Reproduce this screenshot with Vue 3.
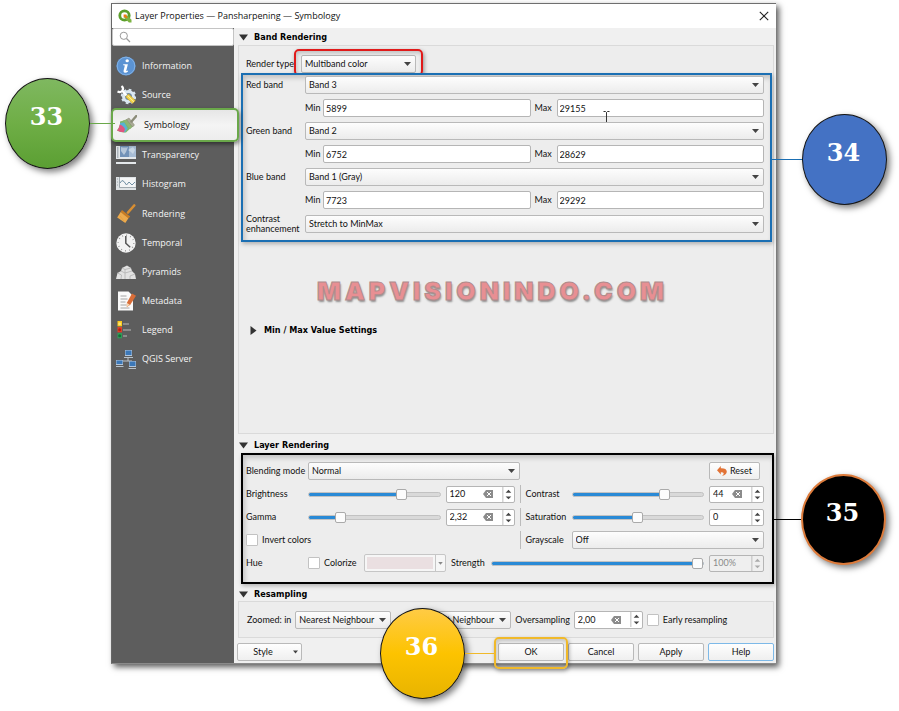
<script setup>
import { ref } from 'vue'

const pages = ['Information', 'Source', 'Symbology', 'Transparency', 'Histogram', 'Rendering', 'Temporal', 'Pyramids', 'Metadata', 'Legend', 'QGIS Server']
const active = ref('Symbology')

const bands = ref([
  { id: 'red', label: 'Red band', band: 'Band 3', min: '5899', max: '29155', pointer: true },
  { id: 'green', label: 'Green band', band: 'Band 2', min: '6752', max: '28629' },
  { id: 'blue', label: 'Blue band', band: 'Band 1 (Gray)', min: '7723', max: '29292' }
])

const left = ref([
  { id: 'brightness', label: 'Brightness', pos: 73, value: '120', clear: true },
  { id: 'gamma', label: 'Gamma', pos: 22, value: '2,32', clear: true }
])
const right = ref([
  { id: 'contrast', label: 'Contrast', pos: 72, value: '44', clear: true },
  { id: 'saturation', label: 'Saturation', pos: 50, value: '0', clear: false }
])
const strength = ref(100)
</script>

<template>
  <main class="page">
    <section class="dialog" aria-label="Layer Properties">
      <header class="titlebar">
        <svg class="logo" viewBox="0 0 14 14" aria-hidden="true">
          <circle cx="6.5" cy="6.5" r="4.7" fill="none" stroke="#5c9f2c" stroke-width="2.8" />
          <path d="M6.2 6.2h3l4.3 4.6v2.7h-2.6L6.2 8.8z" fill="#7cb342" />
          <path d="M5.6 5.6h3.2L8 6.6l1.6 1.7-1.2 1.2-1.7-1.7-1.1.9z" fill="#ee7913" />
        </svg>
        <h1>Layer Properties — Pansharpening — Symbology</h1>
        <button class="close" type="button" aria-label="Close">
          <svg viewBox="0 0 10 10"><path d="M.8.8l8.4 8.4M9.2.8L.8 9.2" stroke="#222" stroke-width="1.1" /></svg>
        </button>
      </header>

      <div class="body">
        <aside class="side">
          <div class="search">
            <svg viewBox="0 0 12 12" aria-hidden="true"><circle cx="4.8" cy="4.8" r="3.6" fill="none" stroke="#999" /><path d="M7.5 7.5l3.5 3.5" stroke="#999" stroke-width="1.2" /></svg>
            <input type="text" aria-label="Search" />
          </div>
          <nav class="pages">
            <a v-for="p in pages" :key="p" href="#" class="page-link" :class="{ active: p === active }" @click.prevent="active = p">
              <svg v-if="p === 'Information'" class="ico" viewBox="0 0 20 20">
                <circle cx="10" cy="10" r="9.6" fill="#5b93d3" /><circle cx="10" cy="10" r="8.8" fill="none" stroke="#82b1e4" />
                <ellipse cx="11.2" cy="4.8" rx="1.7" ry="1.5" fill="#fff" />
                <path d="M7.3 8.3h4.6l-1.6 6.2q-.1.7.5.5l1.2-.6v1.1q-1.6 1.4-3.3 1.2-1.6-.3-1.1-2.1l1.2-4.8q0-.6-.7-.6h-1z" fill="#fff" />
              </svg>
              <svg v-else-if="p === 'Source'" class="ico" viewBox="0 0 20 20">
                <circle cx="12.5" cy="11.5" r="5" fill="#6f8ba5" stroke="#dbe8f2" stroke-width="3" />
                <circle cx="12.5" cy="11.5" r="6.8" fill="none" stroke="#dbe8f2" stroke-width="1.8" stroke-dasharray="2.7 2.640" />
                <path d="M1.500 6.500q3.500 1.500 5-1t-1-4.500M6.500 6l4 4.500" fill="none" stroke="#fff" stroke-width="2.200" />
                <path d="M9.600 12l3-3 6.700 6.600-2.700 2.800z" fill="#f2d44c" stroke="#c79f25" stroke-width=".6" />
                <path d="M11.500 10.500l6.500 6.500" stroke="#fbeb9a" />
              </svg>
              <svg v-else-if="p === 'Symbology'" class="ico" viewBox="0 0 20 20">
                <path d="M3 6.500l9-2.500 4 7-7 6.500Q4 18 0 15.500 3.500 11 3 6.500z" fill="#7db86a" />
                <path d="M2.800 8l4.500-.500 3.500 6-2.800 3.800-5-.800q-1-4 .200-8.500z" fill="#58b3d2" />
                <path d="M2.700 9.500q3 .500 5.300 4.500l-1 3.300Q3 17.500 0 15.500 2.500 12.500 2.700 9.500z" fill="#e0557f" />
                <path d="M6 5.600l5.500-1.800 5.500 6.700-3.800 3.400z" fill="#8fb573" />
                <path d="M9.500 4.500l2.500-1.500 5.500 7-2 2z" fill="#a9aa96" stroke="#85866f" stroke-width=".5" />
                <path d="M14.500 6.500l4.800-5.500" stroke="#8b8c79" stroke-width="2.400" stroke-linecap="round" />
              </svg>
              <svg v-else-if="p === 'Transparency'" class="ico" viewBox="0 0 20 20">
                <path d="M0 1h20v13H0zM0 17h20v2H0z" fill="#e4e8eb" /><path d="M4 1h16v11H4z" fill="#7292b8" />
                <path d="M5 2q4 1 7 0l-2 5-2 3-3-4zM12 5l5-3 2 3-2 4-2-2z" fill="#b5c6d9" /><path d="M13 1h7v11h-7z" fill="#dce6ef" opacity=".5" />
                <path d="M1 2h1.500v11H1z" fill="#aeb5bc" />
              </svg>
              <svg v-else-if="p === 'Histogram'" class="ico" viewBox="0 0 20 20">
                <path d="M0 3h20v13H0z" fill="#dfe3e6" /><path d="M4 4h15v9H4z" fill="#f4f5f6" />
                <path d="M3.500 3v10.500H20M1 5h1M1 8h1M1 11h1" fill="none" stroke="#8e999f" stroke-width=".8" />
                <path d="M4 9l2-2.500 2 1 2.500 3.500 2.500-3 3 3 3-3" fill="none" stroke="#718fa3" />
              </svg>
              <svg v-else-if="p === 'Rendering'" class="ico" viewBox="0 0 20 20">
                <path d="M12 8.500L18.200 1.500" stroke="#d88e31" stroke-width="2.600" stroke-linecap="round" />
                <path d="M6 6l8.200 6.400-1.900 2L4.600 8z" fill="#c97c22" />
                <path d="M4.600 8l7.800 6.300L9.300 19 1.200 13.600z" fill="#edaa4c" />
                <path d="M4 12l4 5" stroke="#e09c3e" stroke-width=".7" />
              </svg>
              <svg v-else-if="p === 'Temporal'" class="ico" viewBox="0 0 20 20">
                <circle cx="10" cy="10" r="9.700" fill="#f3f3f3" />
                <circle cx="10" cy="10" r="7.800" fill="none" stroke="#8a8a8a" stroke-width="1.400" stroke-dasharray=".8 3.285" />
                <path d="M9.800 3v7.200l4.400 4" fill="none" stroke="#555" stroke-width="1.500" />
              </svg>
              <svg v-else-if="p === 'Pyramids'" class="ico" viewBox="0 0 20 20">
                <path d="M0 17l1.500-6L5 9l1-3 5-2.500L15 6l1 3 3 3 1 5z" fill="#e2e2e2" />
                <path d="M6 6l3 1.500L15 6M5 9l4 2 7-2M9 7.500V17M1.500 11l4 2L5 17M19 12l-5 2v3" fill="none" stroke="#b2b2b2" stroke-width=".8" />
              </svg>
              <svg v-else-if="p === 'Metadata'" class="ico" viewBox="0 0 20 20">
                <path d="M2 .5h10.500L17 5v14.500H2z" fill="#fafafa" />
                <path d="M4.500 5h6M4.500 8h7M4.500 11h5M4.500 14h6M4.500 17h9" stroke="#9c9c9c" stroke-width=".9" />
                <path d="M16 2.500l4 2.300-5.700 9-3.500 2.200.1-4.200z" fill="#d96d38" /><path d="M11 12l-.2 3.800 3-2z" fill="#f4d6b0" />
              </svg>
              <svg v-else-if="p === 'Legend'" class="ico" viewBox="0 0 20 20">
                <path d="M1.500 1H6v5.300H1.500z" fill="#fcca1c" /><path d="M1.500 7H6v5.300H1.500z" fill="#e0442a" /><path d="M1.500 13H6v5.300H1.500z" fill="#2e9e58" />
                <circle cx="3.700" cy="3.700" r="1.500" fill="#ffe571" /><circle cx="3.700" cy="9.700" r="1.500" fill="#b91f14" /><circle cx="3.700" cy="15.700" r="1.500" fill="#126d35" />
                <path d="M7 4h6M7 10h8M7 16h4" stroke="#9b9b9b" stroke-width="1.300" />
              </svg>
              <svg v-else class="ico" viewBox="0 0 20 20">
                <path d="M12 8v4M3 12h13v2M4 12v1" fill="none" stroke="#bdc3c9" />
                <path d="M9 1h7v6H9zM0 11h7v5H0zM13 12h7v6h-7z" fill="#b4c6da" />
                <path d="M9.500 1.500h6v4.500h-6zM.500 11.500h6V15h-6zM13.500 12.500h6v4.500h-6z" fill="#3c78b8" />
                <path d="M8 8h9v1H8zM-.500 17h8v1h-8zM12.500 19h7.500v1h-7.500z" fill="#b7c1ca" />
              </svg>
              <span>{{ p }}</span>
              <span v-if="p === active" class="callout c33" aria-hidden="true"><b class="ball green">33</b><i class="wire"></i></span>
            </a>
          </nav>
        </aside>

        <div class="main">
          <h2><svg class="tri" viewBox="0 0 9 7"><path d="M0 .5h9L4.500 6.500z" /></svg>Band Rendering</h2>
          <section class="frame bands">
            <div class="render-row">
              <label for="render">Render type</label>
              <span class="combo render">
                <select id="render"><option>Multiband color</option></select>
                <svg class="arrow" viewBox="0 0 7 4"><path d="M0 0h7L3.500 4z" /></svg>
                <i class="mark red"></i>
              </span>
            </div>
            <div class="boxed blue">
              <template v-for="b in bands" :key="b.id">
                <label :for="b.id">{{ b.label }}</label>
                <span class="combo">
                  <select :id="b.id"><option>{{ b.band }}</option></select>
                  <svg class="arrow" viewBox="0 0 7 4"><path d="M0 0h7L3.500 4z" /></svg>
                </span>
                <div class="range">
                  <label :for="b.id + '-min'">Min</label>
                  <input :id="b.id + '-min'" v-model="b.min" type="text" />
                  <label :for="b.id + '-max'">Max</label>
                  <input :id="b.id + '-max'" v-model="b.max" type="text" />
                  <svg v-if="b.pointer" class="ibeam" viewBox="0 0 7 13"><path d="M.500.500h2l1 1 1-1h2M3.500 1.500v10M.500 12.500h2l1-1 1 1h2" fill="none" stroke="#333" /></svg>
                </div>
              </template>
              <label for="enh">Contrast enhancement</label>
              <span class="combo">
                <select id="enh"><option>Stretch to MinMax</option></select>
                <svg class="arrow" viewBox="0 0 7 4"><path d="M0 0h7L3.500 4z" /></svg>
              </span>
              <span class="callout c34" aria-hidden="true"><i class="wire"></i><b class="ball azure">34</b></span>
            </div>
            <p class="brand">MAPVISIONINDO.COM</p>
            <h3><svg class="tri side-tri" viewBox="0 0 7 9"><path d="M.500 0v9L6.500 4.500z" /></svg>Min / Max Value Settings</h3>
          </section>

          <h2 class="spaced"><svg class="tri" viewBox="0 0 9 7"><path d="M0 .5h9L4.500 6.500z" /></svg>Layer Rendering</h2>
          <section class="boxed black">
            <div class="row">
              <label class="name" for="blend">Blending mode</label>
              <span class="combo blend">
                <select id="blend"><option>Normal</option></select>
                <svg class="arrow" viewBox="0 0 7 4"><path d="M0 0h7L3.500 4z" /></svg>
              </span>
              <button class="btn reset" type="button">
                <svg viewBox="0 0 10 10"><path d="M3.800 0v2.200Q9.600 2 9.800 5.600 9.800 9 5 10q2-1.400 1.700-2.700-.4-1.200-2.900-1V8.500L0 4.200z" fill="#e27336" /></svg>Reset
              </button>
            </div>
            <div class="halves">
              <div class="half">
                <div v-for="s in left" :key="s.id" class="row">
                  <label class="name" :for="s.id">{{ s.label }}</label>
                  <input v-model="s.pos" type="range" :id="s.id" :style="{ '--fill': s.pos + '%' }" />
                  <span class="spin">
                    <input v-model="s.value" type="text" :aria-label="s.label + ' value'" />
                    <svg class="clear" viewBox="0 0 10 8"><path d="M3 0h7v8H3L0 4z" fill="#8b8b8b" /><path d="M4 2l4 4M8 2L4 6" stroke="#fff" /></svg>
                    <svg class="steps" viewBox="0 0 12 16"><path d="M.500 0v16" stroke="#bbb" /><path d="M3.500 6L6.500 3l3 3zM3.500 10l3 3 3-3z" fill="#444" /></svg>
                  </span>
                </div>
                <div class="row"><label class="tick"><input type="checkbox" />Invert colors</label></div>
              </div>
              <div class="half second">
                <div v-for="s in right" :key="s.id" class="row">
                  <label class="name" :for="s.id">{{ s.label }}</label>
                  <input v-model="s.pos" type="range" :id="s.id" :style="{ '--fill': s.pos + '%' }" />
                  <span class="spin narrow">
                    <input v-model="s.value" type="text" :aria-label="s.label + ' value'" />
                    <svg v-if="s.clear" class="clear" viewBox="0 0 10 8"><path d="M3 0h7v8H3L0 4z" fill="#8b8b8b" /><path d="M4 2l4 4M8 2L4 6" stroke="#fff" /></svg>
                    <svg class="steps" viewBox="0 0 12 16"><path d="M.500 0v16" stroke="#bbb" /><path d="M3.500 6L6.500 3l3 3zM3.500 10l3 3 3-3z" fill="#444" /></svg>
                  </span>
                </div>
                <div class="row">
                  <label class="name" for="gray">Grayscale</label>
                  <span class="combo">
                    <select id="gray"><option>Off</option></select>
                    <svg class="arrow" viewBox="0 0 7 4"><path d="M0 0h7L3.500 4z" /></svg>
                  </span>
                </div>
              </div>
            </div>
            <div class="row">
              <span class="name">Hue</span>
              <label class="tick colorize"><input type="checkbox" />Colorize</label>
              <span class="swatch">
                <button type="button" aria-label="Hue color"><i></i></button>
                <svg viewBox="0 0 9 18"><path d="M2 8h5L4.500 11z" fill="#888" /></svg>
              </span>
              <label class="strength" for="strength">Strength</label>
              <input id="strength" v-model="strength" type="range" :style="{ '--fill': strength + '%' }" />
              <span class="spin narrow off">
                <input type="text" value="100%" disabled aria-label="Strength value" />
                <svg class="steps" viewBox="0 0 12 16"><path d="M.500 0v16" stroke="#bbb" /><path d="M3.500 6L6.500 3l3 3zM3.500 10l3 3 3-3z" fill="#aaa" /></svg>
              </span>
            </div>
            <span class="callout c35" aria-hidden="true"><i class="wire"></i><b class="ball ink">35</b></span>
          </section>

          <h2 class="low"><svg class="tri" viewBox="0 0 9 7"><path d="M0 .5h9L4.500 6.500z" /></svg>Resampling</h2>
          <section class="frame resample">
            <label for="zin">Zoomed: in</label>
            <span class="combo near">
              <select id="zin"><option>Nearest Neighbour</option></select>
              <svg class="arrow" viewBox="0 0 7 4"><path d="M0 0h7L3.500 4z" /></svg>
            </span>
            <span class="out"></span>
            <span class="combo near">
              <select aria-label="Zoomed out"><option>Nearest Neighbour</option></select>
              <svg class="arrow" viewBox="0 0 7 4"><path d="M0 0h7L3.500 4z" /></svg>
            </span>
            <label for="over">Oversampling</label>
            <span class="spin">
              <input id="over" type="text" value="2,00" />
              <svg class="clear" viewBox="0 0 10 8"><path d="M3 0h7v8H3L0 4z" fill="#8b8b8b" /><path d="M4 2l4 4M8 2L4 6" stroke="#fff" /></svg>
              <svg class="steps" viewBox="0 0 12 16"><path d="M.500 0v16" stroke="#bbb" /><path d="M3.500 6L6.500 3l3 3zM3.500 10l3 3 3-3z" fill="#444" /></svg>
            </span>
            <label class="tick"><input type="checkbox" />Early resampling</label>
          </section>

          <footer class="actions">
            <button class="btn style" type="button">Style<svg viewBox="0 0 7 4"><path d="M0 0h7L3.500 4z" fill="#444" /></svg></button>
            <span class="ok">
              <button class="btn" type="button">OK</button>
              <i class="mark gold"></i>
              <span class="callout c36" aria-hidden="true"><b class="ball amber">36</b><i class="wire"></i></span>
            </span>
            <button class="btn" type="button">Cancel</button>
            <button class="btn" type="button">Apply</button>
            <button class="btn help" type="button">Help</button>
          </footer>
        </div>
      </div>
    </section>
  </main>
</template>

<style>
body { margin: 0; background: #fff; }
</style>

<style scoped>
* { box-sizing: border-box; }
.page {
  padding: 3px 123px 49px 111px;
  font: 9px/10px Lato, "Liberation Sans", sans-serif;
  color: #111;
}
button, input, select { font: inherit; color: inherit; margin: 0; }
.dialog {
  background: #f0f0f0;
  border-top: 1px solid #6f6f6f;
  border-left: 1px solid #666;
  border-bottom: 1px solid #8a8a8a;
  box-shadow: 3px 3px 6px rgba(0, 0, 0, .65);
}
.titlebar { display: flex; align-items: center; gap: 3px; height: 24px; padding: 0 7px 0 6px; background: #fff; }
.logo { width: 14px; height: 14px; }
.titlebar h1 { flex: 1; margin: 0; font: 400 9px/14px "Open Sans", sans-serif; color: #111; }
.close { display: flex; padding: 0; border: 0; background: none; }
.close svg { width: 10px; height: 10px; }
.body { display: flex; }

.side { flex: none; width: 122px; background: #5d5d5d; }
.search { display: flex; align-items: center; gap: 4px; height: 18px; padding-left: 6px; background: #fff; border: 1px solid #c4c4c4; border-radius: 2px; }
.search svg { width: 12px; height: 12px; }
.search input { flex: 1; min-width: 0; border: 0; background: none; outline: 0; padding: 0; }
.pages { display: flex; flex-direction: column; height: 323px; margin-top: 5px; }
.page-link {
  position: relative; flex: 1; display: flex; align-items: center; gap: 6px;
  padding-left: 4px; color: #f4f4f4; text-decoration: none;
  font: 400 9px/12px "Open Sans", sans-serif;
}
.ico { width: 20px; height: 20px; }
.active {
  z-index: 2; margin: -1px -5px -1px -1px; color: #111; gap: 7px;
  border: 2px solid #6aa84a; border-radius: 5px;
  background: linear-gradient(#e6e6e6, #f4f4f4 50%, #ededed);
  box-shadow: 1px 2px 4px rgba(0, 0, 0, .5);
}

.main { flex: 1; min-width: 0; padding: 0 2px 2px 4px; }
h2, h3 { display: flex; align-items: center; margin: 0; color: #000; font: 700 9px/11px "DejaVu Sans Condensed", "DejaVu Sans", sans-serif; font-stretch: condensed; }
h2 { height: 17px; gap: 6px; padding-top: 1px; padding-left: 1px; }
h2.spaced { margin-top: 3px; height: 16px; padding-top: 0; }
h2.low { padding-top: 3px; }
h3 { gap: 7px; margin: 18px 9px 0; }
.tri { width: 9px; height: 7px; fill: #333; }
.side-tri { width: 7px; height: 9px; }
.frame { border: 1px solid #dadada; background: #ededed; }
.bands { padding: 8px 1px 97px 2px; }
.render-row { display: flex; align-items: center; gap: 7px; height: 19px; padding-left: 5px; }

.combo { position: relative; display: flex; flex: 1; min-width: 0; height: 18px; }
.combo select {
  width: 100%; height: 100%; padding: 0 14px 0 3px; appearance: none;
  border: 1px solid #b9b9b9; border-radius: 2px; background: linear-gradient(#fdfdfd, #ececec);
}
.arrow { position: absolute; right: 5px; top: 7px; width: 7px; height: 4px; fill: #444; pointer-events: none; }
.combo.render { flex: 0 0 115px; }
.mark { position: absolute; pointer-events: none; border-radius: 5px; }
.red { inset: -6px -7px -3px -7px; border: 2px solid #e01a1a; box-shadow: 1px 2px 4px rgba(0, 0, 0, .4), inset 1px 2px 4px rgba(0, 0, 0, .2); }
.gold { inset: -6px -4px -8px -4px; border: 2px solid #f0b92a; box-shadow: 1px 2px 4px rgba(0, 0, 0, .35), inset 1px 2px 4px rgba(0, 0, 0, .2); }

.boxed { position: relative; background: #ededed; box-shadow: 1px 2px 4px rgba(0, 0, 0, .25), inset 2px 3px 5px rgba(0, 0, 0, .18); }
.blue {
  display: grid; grid-template-columns: 54px 1fr; column-gap: 5px; row-gap: 5px; align-items: center;
  padding: 1px 6px 6px 3px; border: 2px solid #1b6fb3;
}
.range { grid-column: 2; position: relative; display: flex; align-items: center; gap: 4px; height: 18px; }
.range label { width: 14px; }
.range label:nth-of-type(2) { width: 18px; }
.range input, .spin {
  height: 18px; border: 1px solid #b5b5b5; border-radius: 2px; background: #fff;
}
.range input { flex: 1; min-width: 0; padding: 0 2px; }
.ibeam { position: absolute; left: 65%; top: 12px; width: 7px; height: 13px; }
.brand {
  margin: 33px 28px 0 0; text-align: center; white-space: nowrap;
  font: 900 25px/32px Inter, "Liberation Sans", sans-serif; letter-spacing: 4px; color: #e88f93;
  -webkit-text-stroke: 1px #b08c8c; text-shadow: 1px 2px 2px rgba(0, 0, 0, .4);
}

.black { display: flex; flex-direction: column; gap: 5px; padding: 7px 8px 10px 3px; margin: 0 0 0 3px; border: 2px solid #000; }
.row { display: flex; align-items: center; height: 18px; gap: 5px; }
.name { flex: none; width: 57px; white-space: nowrap; }
.combo.blend { flex: 0 0 212px; }
.btn {
  display: flex; align-items: center; justify-content: center; width: 66px; height: 18px; padding: 0;
  border: 1px solid #b9b9b9; border-radius: 2px; background: linear-gradient(#fefefe, #efefef);
}
.reset { width: 51px; margin-left: auto; margin-right: 4px; gap: 3px; }
.reset svg { width: 10px; height: 10px; }
.halves { display: grid; grid-template-columns: 268fr 244fr; column-gap: 5px; }
.half { display: flex; flex-direction: column; gap: 5px; min-width: 0; }
.second .row { border-left: 1px solid #bbb; padding-left: 5px; }
.second .name { width: 41px; }
input[type="range"] { flex: 1; min-width: 0; height: 14px; appearance: none; background: none; }
input[type="range"]::-webkit-slider-runnable-track {
  height: 5px; border-radius: 3px; border: 1px solid #c2c2c2;
  background: linear-gradient(#2a8ad6, #2a8ad6) 0 0 / var(--fill) 100% no-repeat border-box #d9d9d9;
}
input[type="range"]::-webkit-slider-thumb {
  appearance: none; width: 11px; height: 11px; margin-top: -4px;
  border: 1px solid #aaa; border-radius: 2px; background: #fcfcfc;
}
.spin { display: flex; align-items: center; flex: none; width: 69px; height: 17px; }
.spin input { flex: 1; width: 0; min-width: 0; padding: 0 0 0 3px; border: 0; background: none; }
.clear { width: 10px; height: 8px; margin-right: 9px; }
.steps { flex: none; width: 12px; height: 15px; }
.narrow { width: 55px; }
.off { color: #8a8a8a; background: #efefef; }
.tick { display: flex; align-items: center; gap: 4px; white-space: nowrap; }
.tick input { appearance: none; width: 12px; height: 12px; border: 1px solid #c2c2c2; border-radius: 1px; background: #fff; }
.colorize { width: 51px; }
.swatch { display: flex; height: 18px; border: 1px solid #c6c6c6; border-radius: 2px; background: #f6f6f6; }
.swatch button { width: 71px; padding: 2px; border: 0; border-right: 1px solid #c6c6c6; background: none; }
.swatch i { display: block; height: 12px; background: #eadfe1; }
.swatch svg { width: 9px; height: 16px; }
.strength { width: 35px; }

.resample { display: flex; align-items: center; gap: 4px; height: 37px; padding-left: 8px; white-space: nowrap; }
.combo.near { flex: 0 0 96px; }
.out { width: 16px; }
.resample .spin { height: 18px; }
.actions { display: flex; gap: 4px; padding-top: 5px; }
.actions .style { width: 65px; margin-left: -1px; margin-right: auto; gap: 20px; padding-left: 12px; }
.style svg { width: 5px; height: 4px; }
.ok { position: relative; }
.help { border-color: #7db9e8; }

.callout { position: absolute; z-index: 3; display: flex; align-items: center; pointer-events: none; }
.ball {
  display: flex; align-items: center; justify-content: center; width: 85px; height: 91px; padding: 0 2px 14px 0;
  border: 1px solid #161616; border-radius: 50%; color: #fff;
  font: 700 24px/28px "DejaVu Serif", serif; box-shadow: 3px 3px 6px rgba(0, 0, 0, .5);
}
.wire { height: 1px; }
.c33 { right: 100%; top: -32px; }
.c33 .wire { width: 25px; margin-right: -2px; background: #6aa84a; }
.green { background: linear-gradient(#7fb860, #6fae46 50%, #5b9f33); }
.c34 { left: 100%; top: 39px; }
.c34 .wire { width: 32px; background: #1b6fb3; }
.azure { background: #4472c4; }
.c35 { left: 100%; top: 19px; }
.c35 .wire { width: 29px; background: #000; }
.ink { background: #000; border: 2px solid #dd7b3b; }
.c36 { right: 100%; top: -35px; margin-right: 4px; }
.c36 .wire { width: 29px; background: #f0b92a; }
.amber { background: linear-gradient(#ffcb45, #fdc300 50%, #e8b400); }
</style>
